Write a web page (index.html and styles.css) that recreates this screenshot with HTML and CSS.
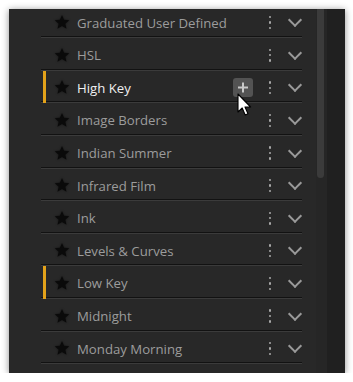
FILE: index.html
```html
<!DOCTYPE html>
<html>
<head>
    <title>Presets</title>
    <link rel="stylesheet" href="styles.css">
</head>
<body>

<svg width="0" height="0" class="defs">
    <symbol id="star" viewBox="0 0 24 24"><path d="M12 1.5l3.1 7.2 7.8.7-5.9 5.1 1.8 7.7L12 18.1l-6.8 4.1 1.8-7.7-5.9-5.1 7.8-.7z"/></symbol>
</svg>

<div class="panel">
    <div class="list">
        <div class="row"><span class="mark"></span><svg class="star"><use href="#star"/></svg><span class="name">Graduated User Defined</span><span class="kebab"><i></i><i></i><i></i></span><span class="chev"></span></div>
        <div class="row"><span class="mark"></span><svg class="star"><use href="#star"/></svg><span class="name">HSL</span><span class="kebab"><i></i><i></i><i></i></span><span class="chev"></span></div>
        <div class="row active"><span class="mark on"></span><svg class="star"><use href="#star"/></svg><span class="name">High Key</span>
            <span class="add">
                <svg width="20" height="19" viewBox="0 0 20 19"><path d="M10 4.5v10M5 9.5h10" stroke="#c8c8c8" stroke-width="2"/></svg>
                <svg class="cursor" width="16" height="24" viewBox="0 0 16 24"><path d="M1 1 L1 19 L5.2 15 L8.2 22 L11 20.8 L8 14 L13.6 14 Z" fill="#fff" stroke="#000" stroke-width="1.1" stroke-linejoin="round"/></svg>
            </span>
            <span class="kebab"><i></i><i></i><i></i></span><span class="chev"></span></div>
        <div class="row"><span class="mark"></span><svg class="star"><use href="#star"/></svg><span class="name">Image Borders</span><span class="kebab"><i></i><i></i><i></i></span><span class="chev"></span></div>
        <div class="row"><span class="mark"></span><svg class="star"><use href="#star"/></svg><span class="name">Indian Summer</span><span class="kebab"><i></i><i></i><i></i></span><span class="chev"></span></div>
        <div class="row"><span class="mark"></span><svg class="star"><use href="#star"/></svg><span class="name">Infrared Film</span><span class="kebab"><i></i><i></i><i></i></span><span class="chev"></span></div>
        <div class="row"><span class="mark"></span><svg class="star"><use href="#star"/></svg><span class="name">Ink</span><span class="kebab"><i></i><i></i><i></i></span><span class="chev"></span></div>
        <div class="row"><span class="mark"></span><svg class="star"><use href="#star"/></svg><span class="name">Levels &amp; Curves</span><span class="kebab"><i></i><i></i><i></i></span><span class="chev"></span></div>
        <div class="row"><span class="mark on"></span><svg class="star"><use href="#star"/></svg><span class="name">Low Key</span><span class="kebab"><i></i><i></i><i></i></span><span class="chev"></span></div>
        <div class="row"><span class="mark"></span><svg class="star"><use href="#star"/></svg><span class="name">Midnight</span><span class="kebab"><i></i><i></i><i></i></span><span class="chev"></span></div>
        <div class="row"><span class="mark"></span><svg class="star"><use href="#star"/></svg><span class="name">Monday Morning</span><span class="kebab"><i></i><i></i><i></i></span><span class="chev"></span></div>
        <div class="row"><span class="mark"></span><svg class="star"><use href="#star"/></svg></div>
    </div>
    <div class="track"><div class="thumb"></div></div>
    <div class="edge"></div>
</div>

</body>
</html>
```

FILE: styles.css
```css
:root {
    --panel-bg: #282828;
    --text-color: #9c9c9c;
    --accent: #e3a21a;
}

body {
    margin: 0;
    padding: 9px 8px 0 9px;
    background: #fff;
    font-family: 'Open Sans', 'Noto Sans', sans-serif;
}

.defs {
    position: absolute;
}

.panel {
    width: 336px;
    height: 364px;
    background: var(--panel-bg);
    display: flex;
    overflow: hidden;
    box-shadow: 0 1px 7px rgba(0,0,0,0.45);
}

.list {
    flex: 1;
    padding: 0 14px 0 32px;
    margin-top: -4.4px;
}

.row {
    box-sizing: border-box;
    height: 32.6px;
    padding-top: 3.5px;
    display: flex;
    align-items: center;
    border-top: 1px solid #3b3b3b;
    border-bottom: 1px solid #121212;
    color: var(--text-color);
    font-size: 13.2px;
}

.row.active .name {
    color: #f0f0f0;
}

.mark {
    width: 3px;
    align-self: stretch;
    margin: -3.5px 0 0 2px;
}

.mark.on {
    background: var(--accent);
    margin-bottom: -2px;
}

.star {
    width: 16px;
    height: 16px;
    margin: -1px 0 0 8px;
    fill: #0a0a0a;
    filter: drop-shadow(0 0 1px rgba(0,0,0,0.5));
}

.name {
    flex: 1;
    margin-left: 7px;
    white-space: nowrap;
}

.add {
    position: relative;
    width: 20px;
    height: 19px;
    border-radius: 3px;
    background: #535353;
    margin-right: 12px;
    display: flex;
}

.cursor {
    position: absolute;
    left: 4px;
    top: 15px;
}

.kebab {
    width: 10px;
    display: flex;
    flex-direction: column;
    align-items: center;
    gap: 3px;
}

.kebab i {
    width: 2.4px;
    height: 2.4px;
    background: #a8a8a8;
    border-radius: 1px;
}

.chev {
    width: 8px;
    height: 8px;
    margin: 0 2px -1px 15px;
    border-right: 2px solid #9a9a9a;
    border-bottom: 2px solid #9a9a9a;
    transform: translateY(-3px) rotate(45deg);
    transform-origin: center;
}

.track {
    width: 11px;
    background: #262626;
}

.thumb {
    width: 7px;
    margin-left: 1px;
    height: 169px;
    background: #3b3b3b;
    border-radius: 0 0 4px 4px;
}

.edge {
    width: 18px;
    background: #202020;
}
```
